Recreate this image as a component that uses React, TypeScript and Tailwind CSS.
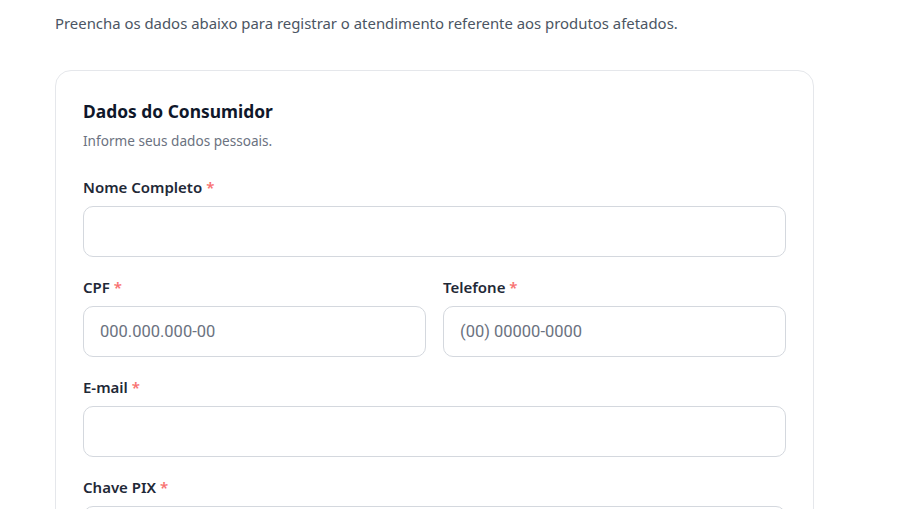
export default function App() {
  const inputBase =
    "w-full h-[51px] rounded-[10px] border border-[#d4d8de] bg-white px-4 text-[16.5px] text-[#374151] placeholder:text-[#6b7280] focus:outline-none";

  const Label = ({ text }: { text: string }) => (
    <label className="block text-[15px] leading-[20px] font-semibold text-[#1f2937] mb-[9px]">
      {text} <span className="text-[#f87171]">*</span>
    </label>
  );

  return (
    <div
      className="min-h-screen bg-white px-[55px] pt-[13px]"
      style={{ fontFamily: '"Noto Sans", "Open Sans", sans-serif' }}
    >
      <p className="text-[14.9px] leading-[20px] text-[#4b5563]">
        Preencha os dados abaixo para registrar o atendimento referente aos produtos afetados.
      </p>

      <div className="mt-[37px] w-[759px] rounded-2xl border border-[#e5e7eb] bg-white px-[27px] pt-[26px] pb-8">
        <h2 className="text-[17.4px] leading-[28px] font-bold text-[#0f172a]">Dados do Consumidor</h2>
        <p className="mt-[6px] text-[13.6px] leading-[20px] text-[#6b7280]">Informe seus dados pessoais.</p>

        <div className="mt-[26px] flex flex-col gap-[20px]">
          <div>
            <Label text="Nome Completo" />
            <input className={inputBase} style={{ fontFamily: "Roboto, sans-serif" }} />
          </div>

          <div className="grid grid-cols-2 gap-[17px]">
            <div>
              <Label text="CPF" />
              <input
                className={inputBase}
                placeholder="000.000.000-00"
                style={{ fontFamily: "Roboto, sans-serif" }}
              />
            </div>
            <div>
              <Label text="Telefone" />
              <input
                className={inputBase}
                placeholder="(00) 00000-0000"
                style={{ fontFamily: "Roboto, sans-serif" }}
              />
            </div>
          </div>

          <div>
            <Label text="E-mail" />
            <input className={inputBase} style={{ fontFamily: "Roboto, sans-serif" }} />
          </div>

          <div>
            <Label text="Chave PIX" />
            <input className={inputBase} style={{ fontFamily: "Roboto, sans-serif" }} />
          </div>
        </div>
      </div>
    </div>
  );
}
